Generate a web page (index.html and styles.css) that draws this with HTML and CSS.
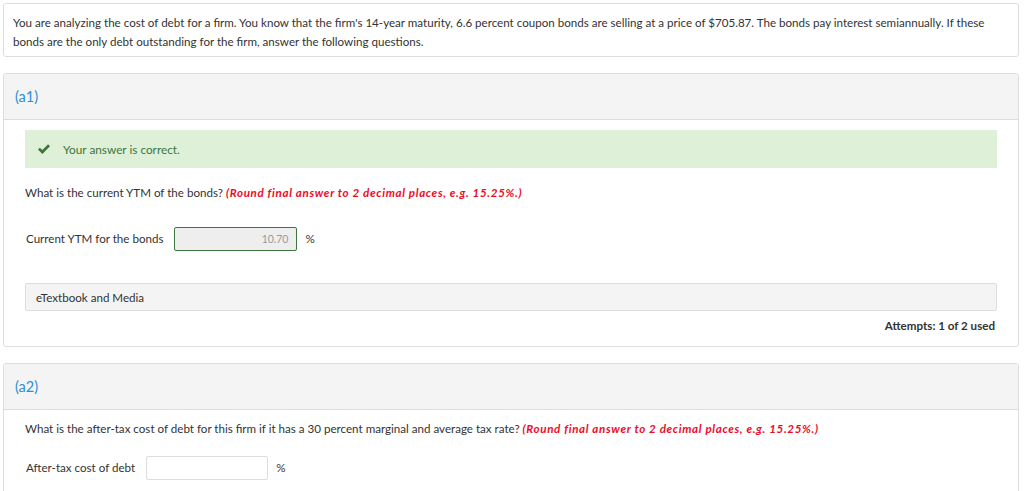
FILE: index.html
```html
<!DOCTYPE html>
<html>
<head>
<meta charset="utf-8">
<link rel="stylesheet" href="styles.css">
</head>
<body>
<div class="intro">
  <p>You are analyzing the cost of debt for a firm. You know that the firm's 14-year maturity, 6.6 percent coupon bonds are selling at a price of $705.87. The bonds pay interest semiannually. If these bonds are the only debt outstanding for the firm, answer the following questions.</p>
</div>

<div class="part">
  <div class="part-head">(a1)</div>
  <div class="part-body">
    <div class="alert">
      <svg class="check" width="14" height="11" viewBox="0 0 14 11"><path d="M1 5.6 L2.9 3.7 L5.3 6.1 L11.1 0.3 L13 2.2 L5.3 9.9 Z" fill="#3c763d"/></svg>
      <span>Your answer is correct.</span>
    </div>
    <p class="question">What is the current YTM of the bonds? <em class="hint">(Round final answer to 2 decimal places, e.g. 15.25%.)</em></p>
    <div class="field">
      <span class="label">Current YTM for the bonds</span>
      <span class="input correct">10.70</span>
      <span class="unit">%</span>
    </div>
    <div class="media">eTextbook and Media</div>
    <div class="attempts">Attempts: 1 of 2 used</div>
  </div>
</div>

<div class="part">
  <div class="part-head">(a2)</div>
  <div class="part-body last">
    <p class="question">What is the after-tax cost of debt for this firm if it has a 30 percent marginal and average tax rate? <em class="hint">(Round final answer to 2 decimal places, e.g. 15.25%.)</em></p>
    <div class="field">
      <span class="label">After-tax cost of debt</span>
      <span class="input empty"></span>
      <span class="unit">%</span>
    </div>
  </div>
</div>
</body>
</html>
```

FILE: styles.css
```css
html, body {
  margin: 0;
  background: #fff;
}
body {
  padding: 3px 5px 0 3px;
  font-family: Lato, "Open Sans", sans-serif;
  font-size: 11.6px;
  color: #333;
}
p { margin: 0; }

.intro {
  border: 1px solid #ddd;
  border-radius: 3px;
  padding: 10px 9px 5px;
  line-height: 18.5px;
  height: 37px;
}

.part {
  margin-top: 16px;
  border: 1px solid #ddd;
  border-radius: 3px;
  overflow: hidden;
}

.part-head {
  background: #f4f4f4;
  border-bottom: 1px solid #ddd;
  height: 45px;
  display: flex;
  align-items: center;
  padding-left: 11px;
  font-size: 14.5px;
  color: #2a8fd6;
}

.part-body {
  padding: 10px 21px 0 21px;
}
.part-body.last { padding-bottom: 40px; }

.alert {
  background: #dff0d8;
  height: 38px;
  display: flex;
  align-items: center;
  color: #3c763d;
  font-size: 11.8px;
}
.check {
  margin-left: 12px;
  margin-right: 12px;
}

.question {
  margin-top: 18px;
  line-height: 14px;
}
.part-body > .question:first-child { margin-top: 2px; }

.hint {
  color: #ee0a1f;
  font-weight: bold;
  font-style: italic;
  letter-spacing: 0.65px;
}

.field {
  display: flex;
  align-items: center;
  margin-top: 27px;
  line-height: 14px;
}
.part-body > .question:first-child + .field { margin-top: 20px; }
.label { margin-left: 1px; }
.input {
  height: 22px;
  width: 121px;
  border: 1px solid #ccc;
  border-radius: 2px;
  margin-left: 11px;
  display: flex;
  align-items: center;
  justify-content: flex-end;
  padding-right: 8px;
  box-sizing: content-box;
  color: #999;
  font-size: 10.5px;
}
.input.correct {
  background: #eee;
  border-color: #3c763d;
  width: 113px;
}
.input.empty {
  width: 112px;
  border-color: #ddd;
}
.unit { margin-left: 8px; }

.media {
  margin-top: 32px;
  background: #f4f4f4;
  border: 1px solid #ddd;
  border-radius: 2px;
  height: 26px;
  display: flex;
  align-items: center;
  padding-left: 10px;
}

.attempts {
  text-align: right;
  font-weight: bold;
  color: #333;
  margin-top: 8px;
  padding-right: 2px;
  padding-bottom: 13px;
  line-height: 14px;
}
```
